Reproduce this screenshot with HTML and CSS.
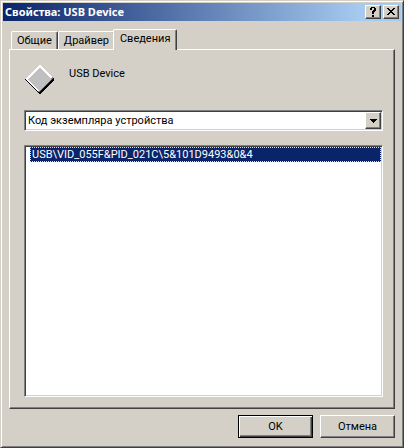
FILE: index.html
```html
<!DOCTYPE html>
<html lang="ru">
<head>
<meta charset="utf-8">
<title>Свойства: USB Device</title>
<link rel="stylesheet" href="styles.css">
</head>
<body>
<main class="window">
  <header class="titlebar">
    <h1 class="title">Свойства: USB Device</h1>
    <button class="caption-button" type="button" aria-label="Справка">
      <svg width="12" height="10" viewBox="0 0 12 10" shape-rendering="crispEdges"><path d="M4 0h4v1h1v3h-1v1h-1v2h-2v-3h1v-1h1v-2h-2v2h-2v-2h1zM5 8h2v2h-2z"/></svg>
    </button>
    <button class="caption-button" type="button" aria-label="Закрыть">
      <svg width="12" height="10" viewBox="0 0 12 10" shape-rendering="crispEdges"><path d="M2 1h2v1h1v1h2v-1h1v-1h2v1h-1v1h-1v1h-1v1h1v1h1v1h1v1h-2v-1h-1v-1h-2v1h-1v1h-2v-1h1v-1h1v-1h1v-1h-1v-1h-1v-1h-1z"/></svg>
    </button>
  </header>
  <div class="tabs" role="tablist">
    <button class="tab" type="button" role="tab">Общие</button>
    <button class="tab" type="button" role="tab">Драйвер</button>
    <button class="tab tab-active" type="button" role="tab" aria-selected="true">Сведения</button>
  </div>
  <section class="panel" role="tabpanel">
    <div class="device">
      <svg class="device-icon" width="32" height="32" viewBox="0 0 32 32" shape-rendering="crispEdges">
        <path d="M15 1h1L30 15v1L16 30h-1L1 16v-1z" fill="#000"/>
        <path d="M15 1h1L29 14 15 28 1 15z" fill="#808080"/>
        <path d="M15 1h1L28 13 14 27 1 15z" fill="#fff"/>
        <path d="M15 4h1L27 15 15 27 4 15z" fill="#c0c0c0"/>
      </svg>
      <p class="device-name">USB Device</p>
    </div>
    <div class="combo">
      <select class="combo-select" aria-label="Свойство">
        <option>Код экземпляра устройства</option>
      </select>
      <span class="combo-arrow"><svg width="7" height="4" viewBox="0 0 7 4" shape-rendering="crispEdges"><path d="M0 0h7v1h-1v1h-1v1h-1v1h-1v-1h-1v-1h-1v-1h-1z"/></svg></span>
    </div>
    <ul class="list" role="listbox" aria-label="Значение">
      <li class="list-item" role="option" aria-selected="true">USB\VID_055F&amp;PID_021C\5&amp;101D9493&amp;0&amp;4</li>
    </ul>
  </section>
  <footer class="actions">
    <button class="button button-default" type="button">OK</button>
    <button class="button" type="button">Отмена</button>
  </footer>
</main>
</body>
</html>
```
FILE: styles.css
```css
* {
  box-sizing: border-box;
}

body {
  margin: 0;
  background: #d4d0c8;
  color: #000;
  font: 11px/14px Roboto, "Liberation Sans", sans-serif;
}

button,
select {
  font: inherit;
  color: inherit;
}

svg {
  display: block;
}

.window {
  display: flex;
  flex-direction: column;
  min-height: 100vh;
  padding: 1px;
  border: 1px solid;
  border-color: #d4d0c8 #404040 #404040 #d4d0c8;
  box-shadow: inset 1px 1px #fff, inset -1px -1px #808080;
}

.titlebar {
  display: flex;
  align-items: center;
  height: 18px;
  margin: 1px 1px 0;
  padding: 0 2px;
  background: linear-gradient(to right, #0a246a, #a6caf0 90%);
}

.title {
  flex: 1;
  margin: 0;
  color: #fff;
  font: bold 11px/14px "Noto Sans", sans-serif;
}

.caption-button,
.combo-arrow {
  display: flex;
  align-items: center;
  justify-content: center;
  width: 16px;
  height: 14px;
  padding: 0;
  background: #d4d0c8;
  border: 1px solid;
  border-color: #fff #404040 #404040 #fff;
  box-shadow: inset -1px -1px #808080;
}

.caption-button + .caption-button {
  margin-left: 2px;
}

.tabs {
  display: flex;
  align-items: flex-end;
  height: 20px;
  margin: 8px 9px 0;
}

.tab {
  height: 18px;
  padding: 0 5px;
  background: #d4d0c8;
  border: 1px solid #fff;
  border-right-color: #404040;
  border-bottom: 0;
  border-radius: 2px 2px 0 0;
  box-shadow: inset -1px 0 #808080;
}

.tab-active {
  position: relative;
  height: 21px;
  margin: 0 0 -1px -2px;
  padding: 0 6px 3px;
}

.panel {
  display: flex;
  flex: 1;
  flex-direction: column;
  margin: 0 7px;
  padding: 14px 11px 11px 14px;
  border: 1px solid;
  border-color: #fff #404040 #404040 #fff;
  box-shadow: inset -1px -1px #808080;
}

.device {
  display: flex;
  gap: 13px;
  height: 46px;
}

.device-name {
  margin: 3px 0 0;
}

.combo,
.list {
  background: #fff;
  border: 1px solid;
  border-color: #808080 #fff #fff #808080;
  box-shadow: inset 1px 1px #404040, inset -1px -1px #d4d0c8;
}

.combo {
  display: flex;
  height: 21px;
  padding: 1px;
}

.combo-select {
  flex: 1;
  padding: 0 2px;
  appearance: none;
  background: transparent;
  border: 0;
  border-radius: 0;
}

.combo-arrow {
  height: 17px;
  pointer-events: none;
}

.list {
  flex: 1;
  margin: 14px 0 0;
  padding: 1px 1px 1px 5px;
  list-style: none;
}

.list-item {
  height: 15px;
  padding: 0 1px;
  background: #0a246a;
  border: 1px dotted #f5db95;
  color: #fff;
  line-height: 13px;
}

.actions {
  display: flex;
  justify-content: flex-end;
  gap: 7px;
  padding: 6px 7px 8px;
}

.button {
  width: 75px;
  height: 23px;
  padding: 0;
  background: #d4d0c8;
  border: 1px solid;
  border-color: #fff #404040 #404040 #fff;
  box-shadow: inset -1px -1px #808080;
}

.button-default {
  border-color: #000;
  box-shadow: inset 1px 1px #fff, inset -1px -1px #404040, inset -2px -2px #808080;
}
```
